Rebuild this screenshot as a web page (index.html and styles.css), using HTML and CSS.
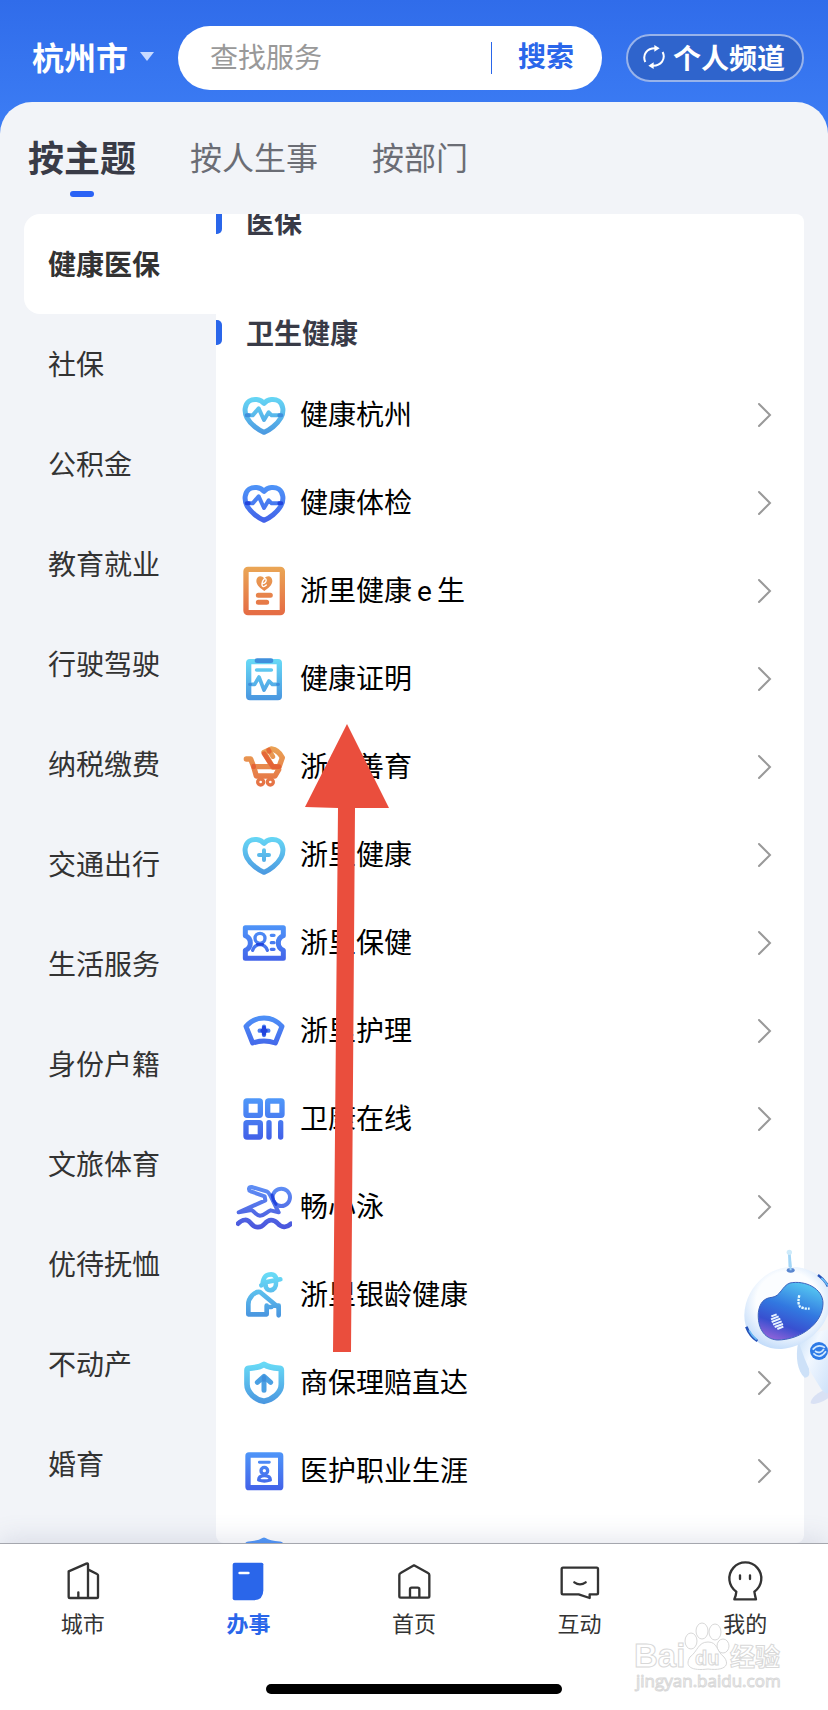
FILE: index.html
```
<!DOCTYPE html>
<html lang="zh-CN">
<head>
    <meta charset="UTF-8">
    <meta name="viewport" content="width=device-width, initial-scale=1.0">
    <title>办事</title>
    <link rel="stylesheet" href="styles.css">
</head>
<body>
    <!-- shared gradients and shapes -->
    <svg class="defs" width="0" height="0" aria-hidden="true">
        <defs>
            <linearGradient id="cyan" gradientUnits="userSpaceOnUse" x1="0" y1="25" x2="0" y2="145">
                <stop offset="0" stop-color="#68daf6"/><stop offset="1" stop-color="#4a97e0"/>
            </linearGradient>
            <linearGradient id="blue" gradientUnits="userSpaceOnUse" x1="0" y1="25" x2="0" y2="145">
                <stop offset="0" stop-color="#4f97f9"/><stop offset="1" stop-color="#4260e8"/>
            </linearGradient>
            <linearGradient id="orange" gradientUnits="userSpaceOnUse" x1="0" y1="15" x2="0" y2="150">
                <stop offset="0" stop-color="#eaa555"/><stop offset="1" stop-color="#e56d44"/>
            </linearGradient>
            <linearGradient id="swim" gradientUnits="userSpaceOnUse" x1="0" y1="20" x2="0" y2="150">
                <stop offset="0" stop-color="#5f8ff5"/><stop offset="1" stop-color="#4a55dc"/>
            </linearGradient>
            <path id="heart" d="M84 49C73 35 51 35 40 42C25 52 24 76 33 92C44 112 68 130 84 136C100 130 124 112 135 92C144 76 143 52 128 42C117 35 95 35 84 49Z"/>
            <path id="shield" d="M84 28C71 37 52 39 38 40Q33 41 33 46V88C33 114 58 134 84 139C110 134 136 114 136 88V46Q136 41 131 40C117 39 97 37 84 28Z"/>
            <path id="chevron" d="M2 2L13 13L2 24"/>
        </defs>
    </svg>

    <header class="header">
        <button class="city">杭州市<span class="caret"></span></button>
        <form class="search">
            <input type="text" placeholder="查找服务" aria-label="查找服务">
            <button type="button">搜索</button>
        </form>
        <button class="channel">
            <svg width="22" height="26" viewBox="0 0 66 78" fill="none" stroke="#fff" stroke-width="6">
                <path d="M7 54C-3 32 12 13 36 13M59 24C69 46 54 65 30 65"/>
                <path d="M34 3L50 13L34 23ZM32 55L16 65L32 75Z" fill="#fff" stroke="none"/>
            </svg>
            个人频道
        </button>
    </header>

    <main class="panel">
        <nav class="tabs">
            <a href="#" class="active">按主题</a>
            <a href="#">按人生事</a>
            <a href="#">按部门</a>
        </nav>

        <div class="content">
            <nav class="sidebar">
                <a href="#" class="active">健康医保</a>
                <a href="#">社保</a>
                <a href="#">公积金</a>
                <a href="#">教育就业</a>
                <a href="#">行驶驾驶</a>
                <a href="#">纳税缴费</a>
                <a href="#">交通出行</a>
                <a href="#">生活服务</a>
                <a href="#">身份户籍</a>
                <a href="#">文旅体育</a>
                <a href="#">优待抚恤</a>
                <a href="#">不动产</a>
                <a href="#">婚育</a>
            </nav>

            <section class="services">
                <div class="services-scroll">
                    <h2 class="first">医保</h2>
                    <h2>卫生健康</h2>
                    <a class="item" href="#">
                        <svg class="icon" viewBox="0 0 168 168" stroke="url(#cyan)">
                            <use href="#heart" stroke-width="15"/>
                            <path d="M32 85H50L68 64L84 99L98 76L107 85H136" stroke-width="12"/>
                            <path class="dark-cyan" d="M32 85H38M130 85H136" stroke-width="12"/>
                        </svg>
                        <span>健康杭州</span>
                        <svg class="arrow" viewBox="0 0 15 26"><use href="#chevron"/></svg>
                    </a>
                    <a class="item" href="#">
                        <svg class="icon" viewBox="0 0 168 168" stroke="url(#blue)">
                            <use href="#heart" stroke-width="15"/>
                            <path d="M32 85H50L68 64L84 99L98 76L107 85H136" stroke-width="12"/>
                            <path class="dark-blue" d="M32 85H38M130 85H136" stroke-width="12"/>
                        </svg>
                        <span>健康体检</span>
                        <svg class="arrow" viewBox="0 0 15 26"><use href="#chevron"/></svg>
                    </a>
                    <a class="item" href="#">
                        <svg class="icon" viewBox="0 0 168 168" stroke="url(#orange)">
                            <rect x="30" y="19" width="109" height="130" rx="6" stroke-width="16"/>
                            <path d="M85 47C76 34 61 40 61 54C61 67 75 77 85 84C95 77 109 67 109 54C109 40 94 34 85 47Z" fill="url(#orange)" stroke="none"/>
                            <path d="M67 97H103M67 118H92" stroke-width="15"/>
                            <path d="M80 62C88 61 92 54 90 49C87 43 79 52 78 62C77 73 84 73 91 66" stroke="#fff" stroke-width="4"/>
                        </svg>
                        <span>浙里健康<i class="latin">e</i>生</span>
                        <svg class="arrow" viewBox="0 0 15 26"><use href="#chevron"/></svg>
                    </a>
                    <a class="item" href="#">
                        <svg class="icon" viewBox="0 0 168 168" stroke="url(#cyan)">
                            <rect x="38" y="32" width="92" height="108" rx="4" stroke-width="16"/>
                            <path d="M40 100H56L69 78L84 117L99 90L109 100H128M62 57H106" stroke-width="11"/>
                            <path class="dark-cyan" d="M63 29H105" stroke-width="14"/>
                            <path class="dark-cyan" d="M41 100H43M125 100H127" stroke-width="10"/>
                        </svg>
                        <span>健康证明</span>
                        <svg class="arrow" viewBox="0 0 15 26"><use href="#chevron"/></svg>
                    </a>
                    <a class="item" href="#">
                        <svg class="icon" viewBox="0 0 168 168" stroke="url(#orange)">
                            <path d="M31 60H44L53 83L61 111H117L128 92M53 83H128" stroke-width="16"/>
                            <path d="M84 40L106 30C120 32 132 42 139 56L129 84H110Z" stroke-width="16"/>
                            <path d="M100 35L111 53" stroke-width="14"/>
                            <path d="M53 81V84M84 44L110 83H129M98 33L100 37" stroke="#e2532c" stroke-opacity=".7" stroke-width="14"/>
                            <circle cx="74" cy="129" r="9" stroke-width="10"/>
                            <circle cx="103" cy="129" r="9" stroke-width="10"/>
                        </svg>
                        <span>浙里善育</span>
                        <svg class="arrow" viewBox="0 0 15 26"><use href="#chevron"/></svg>
                    </a>
                    <a class="item" href="#">
                        <svg class="icon" viewBox="0 0 168 168" stroke="url(#cyan)">
                            <use href="#heart" stroke-width="15"/>
                            <path d="M69 84H99M84 70V99" stroke-width="12"/>
                        </svg>
                        <span>浙里健康</span>
                        <svg class="arrow" viewBox="0 0 15 26"><use href="#chevron"/></svg>
                    </a>
                    <a class="item" href="#">
                        <svg class="icon" viewBox="0 0 168 168" stroke="url(#blue)">
                            <path d="M28 38H142V62C130 67 127 76 127 84S130 101 142 106V130H28V106C40 101 43 92 43 84S40 67 28 62Z" stroke-width="15"/>
                            <circle cx="72" cy="70" r="15" stroke-width="10"/>
                            <path d="M50 106C54 94 62 89 72 89S90 94 94 106M106 61H114M106 83H114M106 103H114" stroke-width="10"/>
                            <path class="dark-blue" d="M64 88H80" stroke-width="8"/>
                        </svg>
                        <span>浙里保健</span>
                        <svg class="arrow" viewBox="0 0 15 26"><use href="#chevron"/></svg>
                    </a>
                    <a class="item" href="#">
                        <svg class="icon" viewBox="0 0 168 168" stroke="url(#blue)">
                            <path d="M30 70C60 37 108 37 138 70L118 120C98 113 70 113 50 120Z" stroke-width="15"/>
                            <path d="M71 83H97M84 71V96" stroke-width="13"/>
                            <path class="dark-blue" d="M79 83H89M84 74V92" stroke-width="12"/>
                        </svg>
                        <span>浙里护理</span>
                        <svg class="arrow" viewBox="0 0 15 26"><use href="#chevron"/></svg>
                    </a>
                    <a class="item" href="#">
                        <svg class="icon" viewBox="0 0 168 168" stroke="url(#blue)" stroke-width="16">
                            <rect x="30" y="30" width="43" height="43" rx="3"/>
                            <rect x="95" y="30" width="43" height="43" rx="3"/>
                            <rect x="30" y="95" width="43" height="43" rx="3"/>
                            <rect x="91" y="87" width="16" height="59" rx="8" fill="url(#blue)" stroke="none"/>
                            <rect x="126" y="87" width="16" height="59" rx="8" fill="url(#blue)" stroke="none"/>
                        </svg>
                        <span>卫康在线</span>
                        <svg class="arrow" viewBox="0 0 15 26"><use href="#chevron"/></svg>
                    </a>
                    <a class="item" href="#">
                        <svg class="icon" viewBox="0 0 168 168" stroke="url(#swim)">
                            <path d="M8 100L88 64L86 52L44 37C36 33 38 22 47 24L94 38C102 42 108 62 128 100L104 94C92 98 86 110 72 110C60 109 56 98 46 93Z" stroke-width="12"/>
                            <circle cx="136" cy="55" r="26" stroke-width="12"/>
                            <path class="dark-blue" d="M108 48Q110 64 120 76" stroke-width="9"/>
                            <path d="M6 134C20 119 34 120 44 132C56 148 74 148 86 134C98 120 112 120 124 132C136 146 152 148 165 134" stroke-width="14"/>
                        </svg>
                        <span>畅心泳</span>
                        <svg class="arrow" viewBox="0 0 15 26"><use href="#chevron"/></svg>
                    </a>
                    <a class="item" href="#">
                        <svg class="icon" viewBox="0 0 168 168" stroke="url(#cyan)" stroke-width="14">
                            <path d="M76 55L92 45L133 37M80 50C82 30 90 22 106 22C118 22 120 30 122 38"/>
                            <path d="M89 54C87 76 122 76 120 46"/>
                            <path d="M37 142V112C37 92 56 72 72 75L126 120M37 142H92V116M92 120H106M112 116H128V145"/>
                        </svg>
                        <span>浙里银龄健康</span>
                        <svg class="arrow" viewBox="0 0 15 26"><use href="#chevron"/></svg>
                    </a>
                    <a class="item" href="#">
                        <svg class="icon" viewBox="0 0 168 168" stroke="url(#cyan)">
                            <use href="#shield" stroke-width="17"/>
                            <path d="M64 82L84 64L104 82M84 66V106" stroke="#4ba0e3" stroke-width="15"/>
                            <path class="dark-cyan" d="M84 67V74" stroke-width="13"/>
                        </svg>
                        <span>商保理赔直达</span>
                        <svg class="arrow" viewBox="0 0 15 26"><use href="#chevron"/></svg>
                    </a>
                    <a class="item" href="#">
                        <svg class="icon" viewBox="0 0 168 168" stroke="url(#blue)">
                            <rect x="36" y="36" width="98" height="98" rx="3" stroke-width="16"/>
                            <rect x="66" y="53" width="38" height="9" rx="4" fill="url(#blue)" stroke="none"/>
                            <circle cx="85" cy="83" r="10" stroke-width="10"/>
                            <path d="M68 111C68 101 76 98 85 98S103 101 103 111Q85 117 68 111Z" stroke-width="10"/>
                        </svg>
                        <span>医护职业生涯</span>
                        <svg class="arrow" viewBox="0 0 15 26"><use href="#chevron"/></svg>
                    </a>
                    <div class="item">
                        <svg class="icon" viewBox="0 0 168 168" stroke="url(#blue)">
                            <use href="#shield" stroke-width="17"/>
                        </svg>
                    </div>
                </div>
            </section>
        </div>
    </main>

    <footer class="footer">
        <nav class="tabbar">
            <a href="#">
                <svg viewBox="0 0 120 120"><path d="M17 31L70 8Q75 6 75 11V110M17 31V107Q17 111 21 111H101Q105 111 105 107V43Q105 40 102 39L76 26M46 94V110"/></svg>
                城市
            </a>
            <a href="#" class="active">
                <svg viewBox="0 0 120 120">
                    <path class="solid" d="M20 5H101Q106 5 106 10V88Q106 118 76 118H20Q14 118 14 112V11Q14 5 20 5Z"/>
                    <path class="line" d="M35 36H61"/>
                </svg>
                办事
            </a>
            <a href="#">
                <svg viewBox="0 0 120 120"><path d="M60 13L20 36Q16 38 16 42V106Q16 110 20 110H102Q106 110 106 106V42Q106 38 102 36ZM48 110V85Q48 80 53 80H71Q76 80 76 85V110"/></svg>
                首页
            </a>
            <a href="#">
                <svg viewBox="0 0 120 120"><path d="M9 20H110Q114 20 114 24V96Q114 100 110 100H89V111L56 100H9Q5 100 5 96V24Q5 20 9 20ZM43 64Q60 76 77 64"/></svg>
                互动
            </a>
            <a href="#">
                <svg viewBox="0 0 120 120"><path d="M34 92A48 48 0 1 1 88 92Q90 104 93 115H28Q33 104 34 92ZM45 43V54M75 43V54"/></svg>
                我的
            </a>
        </nav>
        <div class="home-bar"></div>
    </footer>

    <svg class="robot" viewBox="0 0 384 660" aria-hidden="true">
        <defs>
            <radialGradient id="helmet" cx=".5" cy=".42" r=".6">
                <stop offset=".6" stop-color="#fbfdff"/><stop offset="1" stop-color="#c3dcfa"/>
            </radialGradient>
            <linearGradient id="face" x1=".7" y1="0" x2=".3" y2="1">
                <stop offset="0" stop-color="#55c8f2"/><stop offset=".45" stop-color="#3278e0"/>
                <stop offset=".75" stop-color="#3850d0"/><stop offset="1" stop-color="#8b62d8"/>
            </linearGradient>
            <linearGradient id="suit" x1="0" y1="0" x2="1" y2="1">
                <stop offset="0" stop-color="#c5def8"/><stop offset=".4" stop-color="#f2f8ff"/><stop offset="1" stop-color="#cfe2fa"/>
            </linearGradient>
        </defs>
        <path d="M384 506C355 514 330 535 332 550C345 556 370 545 384 535Z" fill="#d9e1f4"/>
        <path d="M294 370C286 410 292 455 314 473Q328 472 328 458L318 360Z" fill="#cde1f8"/>
        <path d="M298 372L355 335L384 328V520Q372 522 362 505L334 460C318 430 308 400 298 372Z" fill="url(#suit)"/>
        <path d="M264 100H272L276 150H266Z" fill="#a3d6f7"/>
        <circle cx="268" cy="97" r="8" fill="#cdeafa"/>
        <path d="M270 141C330 138 384 175 392 230C396 310 325 382 245 387C185 389 132 350 133 285C135 205 200 144 270 141Z" fill="url(#helmet)"/>
        <ellipse cx="272" cy="151" rx="12" ry="7" fill="#5a86cf"/>
        <path d="M267 120H273L275 151H269Z" fill="#a3d6f7"/>
        <path d="M270 189C315 180 369 205 369 250C368 312 300 360 232 360C190 357 172 320 175 278C179 246 194 234 216 232C242 229 246 197 270 189Z" fill="url(#face)" stroke="#3a61bd" stroke-width="3"/>
        <path d="M298 226Q292 250 300 260Q310 266 329 266" fill="none" stroke="#e6fbff" stroke-width="7" stroke-dasharray="7 3"/>
        <g stroke="#e8f3ff" stroke-width="6">
            <path d="M214 289L230 283M213 298L236 289M215 306L241 296M219 314L245 304M224 321L249 312M232 327L250 320"/>
        </g>
        <path d="M139 320Q149 347 172 363M354 165Q374 179 384 199" fill="none" stroke="#2551b9" stroke-width="8"/>
        <path d="M147 331Q156 348 170 359M364 174Q376 184 384 197" fill="none" stroke="#69baf5" stroke-width="5"/>
        <circle cx="357" cy="393" r="27" fill="#2d7ae6"/>
        <path d="M338 389Q355 370 375 383M340 400Q360 420 378 394M345 393Q360 404 372 387" fill="none" stroke="#cfe8ff" stroke-width="5"/>
    </svg>

    <svg class="pointer" viewBox="0 0 90 630" aria-hidden="true">
        <path d="M44 0L86 84L52 84L48 628L30 628L35 84L2 83Z"/>
    </svg>

    <svg class="watermark" viewBox="0 0 160 76" aria-hidden="true">
        <g class="paw">
            <ellipse cx="59" cy="21" rx="6" ry="8"/>
            <ellipse cx="70" cy="11" rx="6" ry="8"/>
            <ellipse cx="83" cy="12" rx="6" ry="8"/>
            <ellipse cx="91" cy="26" rx="6" ry="7"/>
            <path d="M76 22C86 22 84 31 92 37C99 46 91 51 76 49C60 51 52 47 58 37C66 31 66 22 76 22Z"/>
        </g>
        <text x="2" y="47" class="brand">Bai</text>
        <text x="63" y="45" class="du">du</text>
        <text x="98" y="46" class="cn">经验</text>
        <text x="4" y="67" class="url">jingyan.baidu.com</text>
    </svg>
</body>
</html>
```

FILE: styles.css
```
* {
    box-sizing: border-box;
}

body {
    font-family: Roboto, 'Noto Sans CJK SC', sans-serif;
    margin: 0;
    height: 100vh;
    display: flex;
    flex-direction: column;
    overflow: hidden;
    position: relative;
    background: linear-gradient(to bottom, #306cea 0, #3d7ef5 136px, #fff 136px);
    color: #333;
    font-size: 28px;
}

a {
    color: inherit;
    text-decoration: none;
}

button {
    font: inherit;
    border: none;
    background: none;
    padding: 0;
    cursor: pointer;
    white-space: nowrap;
}

.defs {
    position: absolute;
}

/* header */
.header {
    display: flex;
    align-items: center;
    gap: 24px;
    padding: 26px 24px 12px 32px;
}

.city {
    display: flex;
    align-items: center;
    gap: 12px;
    padding-bottom: 4px;
    color: #fff;
    font-size: 32px;
    font-weight: 700;
}

.caret {
    border: 7px solid transparent;
    border-top: 9px solid #c8daff;
    border-bottom: none;
}

.search {
    display: flex;
    align-items: center;
    flex: 1;
    min-width: 0;
    height: 64px;
    padding: 0 28px 0 32px;
    background: #fff;
    border-radius: 32px;
}

.search input {
    flex: 1;
    min-width: 0;
    padding: 0;
    border: none;
    outline: none;
    background: none;
    font: inherit;
}

.search input::placeholder {
    color: #999;
    opacity: 1;
}

.search button {
    height: 32px;
    line-height: 32px;
    padding-left: 26px;
    border-left: 1px solid #2a66ea;
    color: #2a66ea;
    font-weight: 700;
}

.channel {
    display: flex;
    align-items: center;
    gap: 8px;
    height: 48px;
    padding: 0 17px 2px 15px;
    border: 2px solid #98b3ea;
    border-radius: 24px;
    background: #2f64cc;
    color: #fff;
    font-weight: 700;
}

/* main panel */
.panel {
    flex: 1;
    min-height: 0;
    display: flex;
    flex-direction: column;
    background: #f2f4f8;
    border-radius: 32px 32px 0 0;
}

.tabs {
    display: flex;
    align-items: center;
    gap: 54px;
    height: 112px;
    padding: 0 28px 4px;
    font-size: 32px;
    color: #6b6d75;
}

.tabs a {
    position: relative;
}

.tabs .active {
    font-size: 36px;
    font-weight: 700;
    color: #393b47;
}

.tabs .active::after {
    content: '';
    position: absolute;
    left: 50%;
    bottom: -15px;
    width: 24px;
    height: 6px;
    margin-left: -12px;
    border-radius: 3px;
    background: #2a62f5;
}

.content {
    flex: 1;
    min-height: 0;
    display: flex;
    padding: 0 24px;
}

.sidebar {
    width: 192px;
    overflow: hidden;
}

.sidebar a {
    display: flex;
    align-items: center;
    height: 100px;
    padding: 0 24px 2px;
}

.sidebar .active {
    background: #fff;
    border-radius: 16px 0 0 16px;
    font-weight: 700;
}

.services {
    flex: 1;
    overflow: hidden;
    background: #fff;
    border-radius: 0 8px 8px 8px;
}

/* list is scrolled a little past its first title */
.services-scroll {
    margin-top: -13px;
}

.services h2 {
    display: flex;
    align-items: center;
    gap: 24px;
    margin: 0 0 19px;
    height: 40px;
    font-size: 28px;
    font-weight: 700;
    color: #393b47;
}

.services h2.first {
    margin-bottom: 71px;
}

.services h2::before {
    content: '';
    width: 6px;
    height: 25px;
    border-radius: 0 5px 5px 0;
    background: #2a66ea;
}

.item {
    display: flex;
    align-items: center;
    gap: 8px;
    height: 88px;
    padding: 0 32px 0 20px;
    color: #000;
}

.item span {
    flex: 1;
    padding-bottom: 4px;
}

.latin {
    font-style: normal;
    margin: 0 5px;
}

.icon {
    width: 56px;
    height: 56px;
    fill: none;
    stroke-linecap: round;
    stroke-linejoin: round;
}

.dark-cyan {
    stroke: #3f8fdc;
}

.dark-blue {
    stroke: #2244dd;
}

.arrow {
    width: 15px;
    height: 26px;
    fill: none;
    stroke: #999;
    stroke-width: 2;
    stroke-linecap: round;
}

/* bottom bar */
.footer {
    position: relative;
    padding-bottom: 16px;
    border-top: 1px solid #a5a7ae;
    background: #fff;
    box-shadow: 0 -4px 24px rgba(90, 100, 140, 0.16);
}

.tabbar {
    display: flex;
    height: 140px;
    padding-top: 17px;
}

.tabbar a {
    flex: 1;
    display: flex;
    flex-direction: column;
    align-items: center;
    gap: 10px;
    font-size: 22px;
    line-height: 28px;
}

.tabbar svg {
    width: 40px;
    height: 40px;
    fill: none;
    stroke: #333;
    stroke-width: 7;
    stroke-linecap: round;
    stroke-linejoin: round;
}

.tabbar .active {
    color: #2a66ea;
    font-weight: 700;
}

.tabbar .solid {
    fill: #2a66ea;
    stroke: none;
}

.tabbar .line {
    stroke: #fff;
    stroke-width: 8;
}

.home-bar {
    width: 296px;
    height: 10px;
    margin: 0 auto;
    border-radius: 5px;
    background: #000;
}

/* floating things */
.robot {
    position: absolute;
    right: 0;
    bottom: 270px;
    width: 128px;
    height: 220px;
    pointer-events: none;
}

.pointer {
    position: absolute;
    left: 303px;
    top: 724px;
    width: 90px;
    height: 630px;
    fill: #ea4e3d;
    pointer-events: none;
}

.watermark {
    position: absolute;
    right: 36px;
    bottom: 14px;
    width: 160px;
    height: 76px;
    fill: #fff;
    stroke: #d8d8d8;
    stroke-width: 1;
    pointer-events: none;
}

.paw {
    fill-opacity: 0.8;
}

.brand {
    font: 700 33px 'Liberation Sans', sans-serif;
}

.du {
    font: 700 20px 'Liberation Sans', sans-serif;
}

.cn {
    font: 700 25px 'Noto Sans CJK SC', sans-serif;
}

.url {
    font: 400 17px 'Open Sans', sans-serif;
}
```
